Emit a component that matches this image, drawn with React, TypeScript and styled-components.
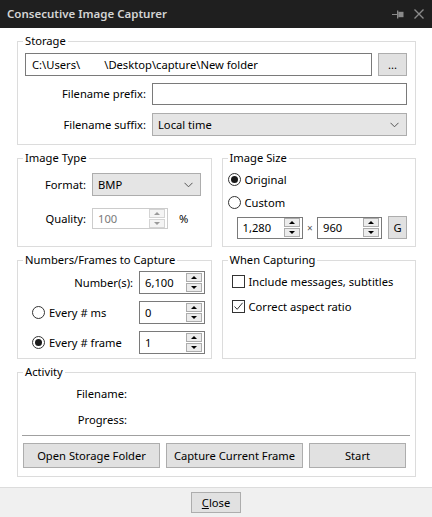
import React from "react";
import styled, { createGlobalStyle } from "styled-components";

const GlobalStyle = createGlobalStyle`
  html, body { margin: 0; padding: 0; background: #ffffff; }
  body {
    font-family: "Noto Sans", "Open Sans", sans-serif;
    font-size: 11.2px;
    line-height: 16px;
    color: #000;
  }
  * { box-sizing: border-box; }
`;

const Window = styled.div`
  width: 432px;
  height: 517px;
  display: flex;
  flex-direction: column;
  overflow: hidden;
  background: #ffffff;
`;

const TitleBar = styled.div`
  height: 28px;
  flex: none;
  background: #1f1f1f;
  display: flex;
  align-items: center;
  justify-content: space-between;
  padding: 0 8px 0 7px;
`;

const Title = styled.div`
  color: #d4d4d4;
  font-weight: 600;
  font-size: 11.5px;
`;

const TitleIcons = styled.div`
  display: flex;
  align-items: center;
  gap: 10px;
  color: #8a8a8a;
`;

const Body = styled.div`
  flex: 1;
  display: flex;
  flex-direction: column;
  gap: 5px;
  padding: 5px 16px 0 17px;
`;

const Group = styled.fieldset`
  margin: 0;
  min-width: 0;
  border: 1px solid #dcdcdc;
  padding: 0 5px;
`;

const Legend = styled.legend`
  padding: 0 2px;
  margin: 0;
  line-height: 16px;
  font-size: 11.2px;
`;

const TwoCols = styled.div`
  display: grid;
  grid-template-columns: 1fr 1fr;
  gap: 10px;
`;

/* Storage */
const StorageBody = styled.div`
  display: flex;
  flex-direction: column;
  padding: 4px 3px 8px 2px;
`;

const PathRow = styled.div`
  display: flex;
  gap: 6px;
  margin-bottom: 7px;
`;

const TextBox = styled.div<{ $h: number }>`
  flex: 1;
  height: ${(p) => p.$h}px;
  border: 1px solid #7a7a7a;
  background: #fff;
  display: flex;
  align-items: center;
  padding-left: 6px;
  white-space: pre;
`;

const Blank = styled.span`
  display: inline-block;
  width: 24px;
`;

const Button = styled.button<{ $w?: number; $h: number }>`
  ${(p) => (p.$w ? `width: ${p.$w}px;` : "")}
  height: ${(p) => p.$h}px;
  border: 1px solid #adadad;
  background: #e1e1e1;
  font-family: inherit;
  font-size: 11.2px;
  color: #000;
  padding: 0;
  display: flex;
  align-items: center;
  justify-content: center;
  flex: none;
`;

const FieldRow = styled.div<{ $label: number; $gapAfter?: number }>`
  display: grid;
  grid-template-columns: ${(p) => p.$label}px 1fr;
  column-gap: 6px;
  align-items: center;
  margin-bottom: ${(p) => p.$gapAfter ?? 0}px;
`;

const Label = styled.span`
  text-align: right;
  white-space: nowrap;
`;

const Select = styled.div<{ $w?: number }>`
  ${(p) => (p.$w ? `width: ${p.$w}px;` : "")}
  height: 23px;
  border: 1px solid #adadad;
  background: #e5e5e5;
  display: flex;
  align-items: center;
  justify-content: space-between;
  padding: 0 7px 0 5px;
`;

const Chevron = () => (
  <svg width="9" height="6" viewBox="0 0 9 6">
    <path d="M0.5 0.8 L4.5 4.8 L8.5 0.8" fill="none" stroke="#555" strokeWidth="1" />
  </svg>
);

/* Spin box */
const SpinBox = styled.div<{ $w: number; $h: number; $disabled?: boolean }>`
  width: ${(p) => p.$w}px;
  height: ${(p) => p.$h}px;
  border: 1px solid ${(p) => (p.$disabled ? "#cccccc" : "#7a7a7a")};
  background: #fff;
  display: flex;
  padding: 0 2px 0 0;
  flex: none;
`;

const SpinText = styled.span<{ $disabled?: boolean }>`
  flex: 1;
  display: flex;
  align-items: center;
  padding-left: 5px;
  color: ${(p) => (p.$disabled ? "#7a7a7a" : "#000")};
`;

const SpinButtons = styled.div`
  width: 16px;
  display: flex;
  flex-direction: column;
  justify-content: center;
  gap: 1px;
`;

const SpinButton = styled.div<{ $disabled?: boolean }>`
  height: 9px;
  border: 1px solid ${(p) => (p.$disabled ? "#d4d4d4" : "#acacac")};
  background: ${(p) => (p.$disabled ? "#f4f4f4" : "#ececec")};
  display: flex;
  align-items: center;
  justify-content: center;
`;

const Arrow = styled.span<{ $down?: boolean; $disabled?: boolean }>`
  width: 0;
  height: 0;
  border-left: 3.5px solid transparent;
  border-right: 3.5px solid transparent;
  ${(p) =>
    p.$down
      ? `border-top: 3px solid ${p.$disabled ? "#9a9a9a" : "#000"};`
      : `border-bottom: 3px solid ${p.$disabled ? "#9a9a9a" : "#000"};`}
`;

const Spin: React.FC<{ value: string; w: number; h: number; disabled?: boolean }> = ({
  value,
  w,
  h,
  disabled,
}) => (
  <SpinBox $w={w} $h={h} $disabled={disabled}>
    <SpinText $disabled={disabled}>{value}</SpinText>
    <SpinButtons>
      <SpinButton $disabled={disabled}>
        <Arrow $disabled={disabled} />
      </SpinButton>
      <SpinButton $disabled={disabled}>
        <Arrow $down $disabled={disabled} />
      </SpinButton>
    </SpinButtons>
  </SpinBox>
);

/* Image type */
const TypeBody = styled.div`
  display: grid;
  grid-template-columns: 63px auto;
  column-gap: 6px;
  row-gap: 12px;
  align-items: center;
  padding: 7px 4px 0 0;
  justify-content: start;
`;

const InlineRow = styled.div`
  display: flex;
  align-items: center;
`;

const Percent = styled.span`
  margin-left: 11px;
`;

/* Image size */
const SizeBody = styled.div`
  display: flex;
  flex-direction: column;
  padding: 5px 3px 7px 0;
`;

const OptionRow = styled.label<{ $gapAfter?: number; $indent?: number }>`
  display: flex;
  align-items: center;
  height: 17px;
  gap: 4px;
  margin-bottom: ${(p) => p.$gapAfter ?? 0}px;
  padding-left: ${(p) => p.$indent ?? 0}px;
  white-space: nowrap;
`;

const RadioCircle = styled.span<{ $checked?: boolean }>`
  width: 13px;
  height: 13px;
  border-radius: 50%;
  border: 1px solid #333;
  background: #fff;
  display: flex;
  align-items: center;
  justify-content: center;
  flex: none;
  &::after {
    content: "";
    width: 7px;
    height: 7px;
    border-radius: 50%;
    background: ${(p) => (p.$checked ? "#1a1a1a" : "transparent")};
  }
`;

const CheckSquare = styled.span`
  width: 13px;
  height: 13px;
  border: 1px solid #333;
  background: #fff;
  display: flex;
  align-items: center;
  justify-content: center;
  flex: none;
`;

const SizeRow = styled.div`
  display: flex;
  align-items: center;
  padding-left: 9px;
`;

const Times = styled.span`
  width: 17px;
  text-align: center;
  color: #555;
  font-size: 10px;
`;

/* Numbers */
const NumbersBody = styled.div`
  display: grid;
  grid-template-columns: 110px 66px;
  column-gap: 6px;
  row-gap: 7px;
  align-items: center;
  padding: 3px 0 4px 0;
`;

const RadioCell = styled.label`
  display: flex;
  align-items: center;
  gap: 4px;
  padding-left: 9px;
  white-space: nowrap;
`;

/* When capturing */
const CaptureBody = styled.div`
  display: flex;
  flex-direction: column;
  padding: 5px 0 0 4px;
`;

/* Activity */
const ActivityBody = styled.div`
  display: flex;
  flex-direction: column;
  padding: 6px 0 8px 0;
`;

const InfoRow = styled.div<{ $gapAfter?: number }>`
  display: grid;
  grid-template-columns: 104px 1fr;
  height: 16px;
  align-items: center;
  margin-bottom: ${(p) => p.$gapAfter ?? 0}px;
`;

const Separator = styled.div`
  height: 1px;
  background: #a0a0a0;
  margin: 0 0 7px -1px;
`;

const ButtonRow = styled.div`
  display: grid;
  grid-template-columns: 137px 137px 1fr;
  gap: 6px;
  padding-right: 4px;
`;

const Footer = styled.div`
  height: 30px;
  flex: none;
  border-top: 1px solid #dcdcdc;
  background: #f0f0f0;
  display: flex;
  align-items: center;
  justify-content: center;
`;

const PinIcon = () => (
  <svg width="12" height="9" viewBox="0 0 12 9">
    <rect x="0" y="4" width="5" height="1" fill="currentColor" />
    <rect x="5" y="0.5" width="1.3" height="8" fill="currentColor" />
    <rect x="6.3" y="1.8" width="5.2" height="5.4" fill="currentColor" />
  </svg>
);

const CloseIcon = () => (
  <svg width="10" height="10" viewBox="0 0 10 10">
    <path d="M0.5 0.5 L9.5 9.5 M9.5 0.5 L0.5 9.5" stroke="currentColor" strokeWidth="1.4" />
  </svg>
);

const CheckMark = () => (
  <svg width="11" height="11" viewBox="0 0 11 11">
    <path d="M1.5 5.5 L4.2 8.3 L9.6 1.8" fill="none" stroke="#333" strokeWidth="1" />
  </svg>
);

export default function App() {
  return (
    <>
      <GlobalStyle />
      <Window>
        <TitleBar>
          <Title>Consecutive Image Capturer</Title>
          <TitleIcons>
            <PinIcon />
            <CloseIcon />
          </TitleIcons>
        </TitleBar>
        <Body>
          <Group>
            <Legend>Storage</Legend>
            <StorageBody>
              <PathRow>
                <TextBox $h={23}>
                  C:\Users\<Blank />\Desktop\capture\New folder
                </TextBox>
                <Button $w={29} $h={23}>...</Button>
              </PathRow>
              <FieldRow $label={121} $gapAfter={8}>
                <Label>Filename prefix:</Label>
                <TextBox $h={22} />
              </FieldRow>
              <FieldRow $label={121}>
                <Label>Filename suffix:</Label>
                <Select>
                  <span>Local time</span>
                  <Chevron />
                </Select>
              </FieldRow>
            </StorageBody>
          </Group>

          <TwoCols>
            <Group>
              <Legend>Image Type</Legend>
              <TypeBody>
                <Label>Format:</Label>
                <Select $w={109}>
                  <span>BMP</span>
                  <Chevron />
                </Select>
                <Label>Quality:</Label>
                <InlineRow>
                  <Spin value="100" w={76} h={21} disabled />
                  <Percent>%</Percent>
                </InlineRow>
              </TypeBody>
            </Group>
            <Group>
              <Legend>Image Size</Legend>
              <SizeBody>
                <OptionRow $gapAfter={6}>
                  <RadioCircle $checked />
                  Original
                </OptionRow>
                <OptionRow $gapAfter={5}>
                  <RadioCircle />
                  Custom
                </OptionRow>
                <SizeRow>
                  <Spin value="1,280" w={66} h={22} />
                  <Times>×</Times>
                  <Spin value="960" w={65} h={22} />
                  <Button $w={19} $h={23} style={{ marginLeft: 6 }}>G</Button>
                </SizeRow>
              </SizeBody>
            </Group>
          </TwoCols>

          <TwoCols>
            <Group>
              <Legend>Numbers/Frames to Capture</Legend>
              <NumbersBody>
                <Label>Number(s):</Label>
                <Spin value="6,100" w={66} h={23} />
                <RadioCell>
                  <RadioCircle />
                  Every # ms
                </RadioCell>
                <Spin value="0" w={66} h={23} />
                <RadioCell>
                  <RadioCircle $checked />
                  Every # frame
                </RadioCell>
                <Spin value="1" w={66} h={23} />
              </NumbersBody>
            </Group>
            <Group>
              <Legend>When Capturing</Legend>
              <CaptureBody>
                <OptionRow $gapAfter={8}>
                  <CheckSquare />
                  Include messages, subtitles
                </OptionRow>
                <OptionRow>
                  <CheckSquare>
                    <CheckMark />
                  </CheckSquare>
                  Correct aspect ratio
                </OptionRow>
              </CaptureBody>
            </Group>
          </TwoCols>

          <Group>
            <Legend>Activity</Legend>
            <ActivityBody>
              <InfoRow $gapAfter={10}>
                <Label>Filename:</Label>
                <span />
              </InfoRow>
              <InfoRow $gapAfter={7}>
                <Label>Progress:</Label>
                <span />
              </InfoRow>
              <Separator />
              <ButtonRow>
                <Button $h={25}>Open Storage Folder</Button>
                <Button $h={25}>Capture Current Frame</Button>
                <Button $h={25}>Start</Button>
              </ButtonRow>
            </ActivityBody>
          </Group>
        </Body>
        <Footer>
          <Button $w={50} $h={21}>
            <span>
              <u>C</u>lose
            </span>
          </Button>
        </Footer>
      </Window>
    </>
  );
}
